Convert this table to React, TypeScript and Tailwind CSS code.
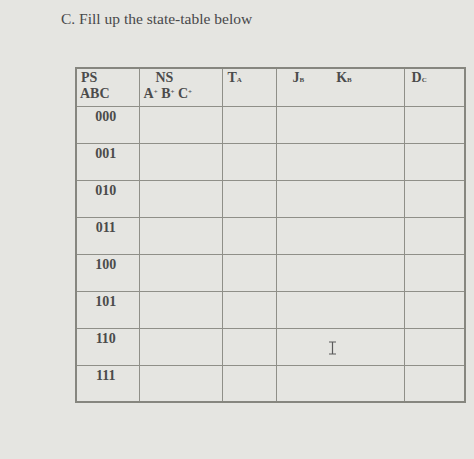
const rows = ["000", "001", "010", "011", "100", "101", "110", "111"];

const Sub = ({ children }: { children: string }) => (
  <span className="text-[7px] align-baseline">{children}</span>
);

const Sup = ({ children }: { children: string }) => (
  <span className="relative -top-[4px] text-[7px]">{children}</span>
);

export default function App() {
  return (
    <div className="w-[474px] h-[459px] overflow-hidden bg-[#e5e5e1] font-['Liberation_Serif',serif] text-[#48484a]">
      <div className="pl-[61px] pt-[9px] text-[15.5px] leading-[20px]">C. Fill up the state-table below</div>

      <table className="ml-[75px] mt-[38px] table-fixed border-collapse border-2 border-[#86867f] font-bold text-[14px] leading-[16px] text-[#4b4b4b]">
        <colgroup>
          <col className="w-[63px]" />
          <col className="w-[83px]" />
          <col className="w-[54px]" />
          <col className="w-[128px]" />
          <col className="w-[61px]" />
        </colgroup>
        <thead>
          <tr className="h-[38px]">
            <th className="border border-[#8f8f88] align-top text-left pl-[3px] pt-[1px] font-bold">
              <div className="pl-[1px]">PS</div>
              <div>ABC</div>
            </th>
            <th className="border border-[#8f8f88] align-top text-left pl-[4px] pt-[1px] font-bold">
              <div className="pl-[12px]">NS</div>
              <div className="whitespace-nowrap">
                A<Sup>+</Sup> B<Sup>+</Sup> C<Sup>+</Sup>
              </div>
            </th>
            <th className="border border-[#8f8f88] align-top text-left pl-[5px] pt-[1px] font-bold">
              T<Sub>A</Sub>
            </th>
            <th className="border border-[#8f8f88] align-top text-left pt-[1px] font-bold">
              <div className="flex gap-[32px] pl-[16px]">
                <span>
                  J<Sub>B</Sub>
                </span>
                <span>
                  K<Sub>B</Sub>
                </span>
              </div>
            </th>
            <th className="border border-[#8f8f88] align-top text-left pl-[7px] pt-[1px] font-bold">
              D<Sub>C</Sub>
            </th>
          </tr>
        </thead>
        <tbody>
          {rows.map((r) => (
            <tr key={r} className="h-[37px]">
              <td className="border border-[#8f8f88] align-top text-center pt-[2px] pr-[4px]">{r}</td>
              <td className="border border-[#8f8f88]"></td>
              <td className="border border-[#8f8f88]"></td>
              <td className="border border-[#8f8f88] relative">
                {r === "110" && (
                  <svg
                    className="absolute left-[51px] top-[12px]"
                    width="9"
                    height="14"
                    viewBox="0 0 9 14"
                    fill="none"
                    stroke="#5a5a5a"
                    strokeWidth="1.2"
                  >
                    <path d="M1 1h7M4.5 1v12M1 13h7" />
                  </svg>
                )}
              </td>
              <td className="border border-[#8f8f88]"></td>
            </tr>
          ))}
        </tbody>
      </table>
    </div>
  );
}
